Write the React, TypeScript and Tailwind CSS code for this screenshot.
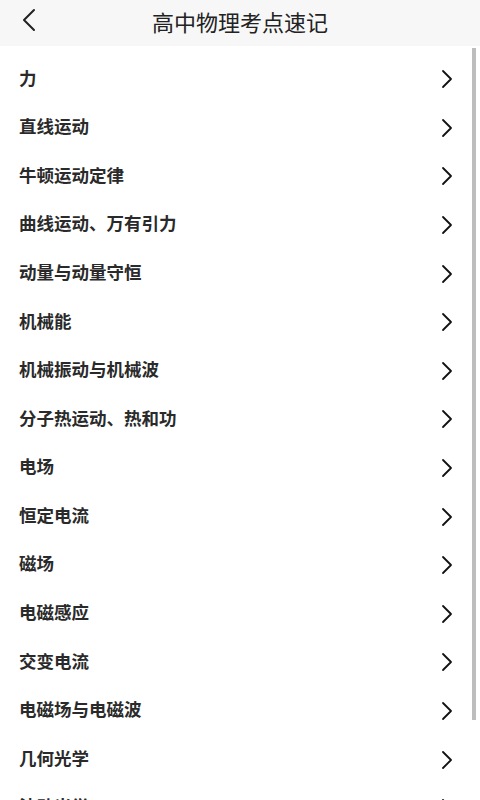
import React from "react";

const items = [
  "力",
  "直线运动",
  "牛顿运动定律",
  "曲线运动、万有引力",
  "动量与动量守恒",
  "机械能",
  "机械振动与机械波",
  "分子热运动、热和功",
  "电场",
  "恒定电流",
  "磁场",
  "电磁感应",
  "交变电流",
  "电磁场与电磁波",
  "几何光学",
  "波动光学",
];

const Chevron = () => (
  <svg width="14" height="22" viewBox="0 0 14 22" fill="none" className="mt-[4px]">
    <path d="M3 3 L11 11 L3 19" stroke="#111" strokeWidth="1.8" strokeLinecap="round" strokeLinejoin="round" />
  </svg>
);

export default function App() {
  return (
    <div
      className="relative w-[480px] h-[800px] overflow-hidden bg-white"
      style={{ fontFamily: '"Noto Sans CJK SC", "Noto Sans", sans-serif' }}
    >
      <div className="relative h-[46px] bg-[#f7f7f7] flex items-center justify-center">
        <div className="absolute left-[20px] top-[7px]">
          <svg width="18" height="26" viewBox="0 0 18 26" fill="none">
            <path d="M14 3 L4 13 L14 23" stroke="#222" strokeWidth="2" strokeLinecap="round" strokeLinejoin="round" />
          </svg>
        </div>
        <div className="text-[22px] leading-none text-[#222] -mt-[4px]">高中物理考点速记</div>
      </div>
      <div className="pt-[7px]">
        {items.map((t) => (
          <div key={t} className="h-[48.6px] flex items-center justify-between pl-[19px] pr-[26px]">
            <span className="text-[17.5px] font-bold text-[#2a2a2a] leading-none">{t}</span>
            <Chevron />
          </div>
        ))}
      </div>
      <div className="absolute right-[4px] top-[48px] w-[4px] h-[672px] bg-[#bdbdbd]" />
    </div>
  );
}
